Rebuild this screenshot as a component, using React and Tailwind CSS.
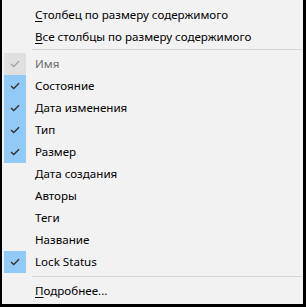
import React from 'react';

const items = [
  { label: 'Имя', checked: true, disabled: true },
  { label: 'Состояние', checked: true },
  { label: 'Дата изменения', checked: true },
  { label: 'Тип', checked: true },
  { label: 'Размер', checked: true },
  { label: 'Дата создания' },
  { label: 'Авторы' },
  { label: 'Теги' },
  { label: 'Название' },
  { label: 'Lock Status', checked: true },
];

function Check({ disabled }) {
  return (
    <svg width="10" height="8" viewBox="0 0 10 8">
      <path d="M1 4 L3.8 6.6 L9 1.2" fill="none" stroke={disabled ? '#a6a6a6' : '#333333'} strokeWidth="1.4" />
    </svg>
  );
}

function Row({ item }) {
  return (
    <div className="flex h-[22px] items-center">
      <div
        className={
          'ml-[2px] flex h-[22px] w-[22px] items-center justify-center ' +
          (item.checked ? (item.disabled ? 'bg-[#e0e0e0]' : 'bg-[#91c9f7]') : '')
        }
      >
        {item.checked && <Check disabled={item.disabled} />}
      </div>
      <span className={'ml-[9px] ' + (item.disabled ? 'text-[#6d6d6d]' : 'text-black')}>{item.label}</span>
    </div>
  );
}

function Separator() {
  return <div className="ml-[30px] mr-[1px] h-px bg-[#d7d7d7]" />;
}

export default function App() {
  return (
    <div
      className="h-[307px] w-[306px] border-b-[3px] border-l-2 border-r-[3px] border-black bg-[#f2f2f2] text-[11.6px] leading-none"
      style={{ fontFamily: '"Noto Sans", "Open Sans", sans-serif' }}
    >
      <div className="pt-[4px]">
        <div className="flex h-[22px] items-center pl-[33px]">
          <span><span className="underline underline-offset-2">С</span>толбец по размеру содержимого</span>
        </div>
        <div className="flex h-[22px] items-center pl-[33px]">
          <span><span className="underline underline-offset-2">В</span>се столбцы по размеру содержимого</span>
        </div>
        <div className="pb-[3px] pt-[1px]">
          <Separator />
        </div>
        {items.map((it) => (
          <Row key={it.label} item={it} />
        ))}
        <div className="pb-[3px] pt-[3px]">
          <Separator />
        </div>
        <div className="flex h-[22px] items-center pl-[33px]">
          <span><span className="underline underline-offset-2">П</span>одробнее...</span>
        </div>
      </div>
    </div>
  );
}
